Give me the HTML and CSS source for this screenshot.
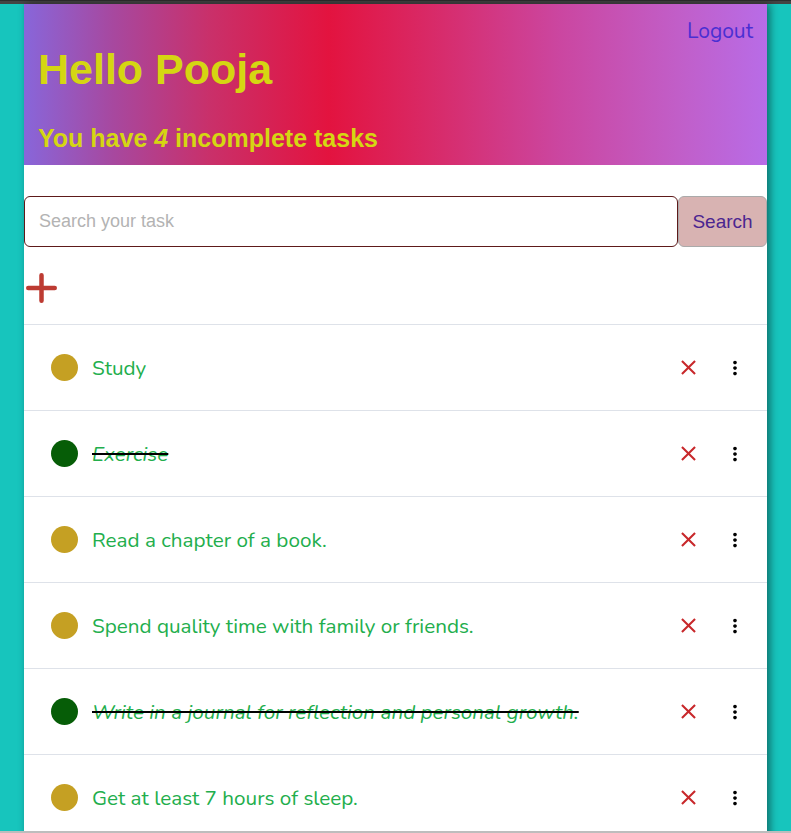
FILE: index.html
```html
<!DOCTYPE html>
<html lang="en">
<head>
<meta charset="utf-8">
<title>Todo</title>
<link rel="stylesheet" href="styles.css">
</head>
<body>
<div class="topbar"></div>
<main class="card">
  <header class="hero">
    <a class="logout" href="#">Logout</a>
    <h1 class="hello">Hello Pooja</h1>
    <h2 class="summary">You have <em>4</em> incomplete tasks</h2>
  </header>
  <form class="search">
    <input class="search-input" type="text" placeholder="Search your task">
    <button class="search-btn" type="button">Search</button>
  </form>
  <div class="add">
    <svg class="plus" width="32" height="32" viewBox="0 0 32 32"><path d="M16.5 3.25V28.75M3.25 16H29.75" stroke="#bd3b32" stroke-width="4.5" stroke-linecap="round" fill="none"/></svg>
  </div>
  <ul class="tasks">
    <li class="task"><span class="dot"></span><span class="label">Study</span>
      <svg class="close" viewBox="0 0 24 24"><path d="M19 6.41 17.59 5 12 10.59 6.41 5 5 6.41 10.59 12 5 17.59 6.41 19 12 13.41 17.59 19 19 17.59 13.41 12z"/></svg>
      <svg class="more" viewBox="0 0 24 24"><path d="M12 8c1.1 0 2-.9 2-2s-.9-2-2-2-2 .9-2 2 .9 2 2 2zm0 2c-1.1 0-2 .9-2 2s.9 2 2 2 2-.9 2-2-.9-2-2-2zm0 6c-1.1 0-2 .9-2 2s.9 2 2 2 2-.9 2-2-.9-2-2-2z"/></svg></li>
    <li class="task done"><span class="dot"></span><span class="label">Exercise</span>
      <svg class="close" viewBox="0 0 24 24"><path d="M19 6.41 17.59 5 12 10.59 6.41 5 5 6.41 10.59 12 5 17.59 6.41 19 12 13.41 17.59 19 19 17.59 13.41 12z"/></svg>
      <svg class="more" viewBox="0 0 24 24"><path d="M12 8c1.1 0 2-.9 2-2s-.9-2-2-2-2 .9-2 2 .9 2 2 2zm0 2c-1.1 0-2 .9-2 2s.9 2 2 2 2-.9 2-2-.9-2-2-2zm0 6c-1.1 0-2 .9-2 2s.9 2 2 2 2-.9 2-2-.9-2-2-2z"/></svg></li>
    <li class="task"><span class="dot"></span><span class="label">Read a chapter of a book.</span>
      <svg class="close" viewBox="0 0 24 24"><path d="M19 6.41 17.59 5 12 10.59 6.41 5 5 6.41 10.59 12 5 17.59 6.41 19 12 13.41 17.59 19 19 17.59 13.41 12z"/></svg>
      <svg class="more" viewBox="0 0 24 24"><path d="M12 8c1.1 0 2-.9 2-2s-.9-2-2-2-2 .9-2 2 .9 2 2 2zm0 2c-1.1 0-2 .9-2 2s.9 2 2 2 2-.9 2-2-.9-2-2-2zm0 6c-1.1 0-2 .9-2 2s.9 2 2 2 2-.9 2-2-.9-2-2-2z"/></svg></li>
    <li class="task"><span class="dot"></span><span class="label">Spend quality time with family or friends.</span>
      <svg class="close" viewBox="0 0 24 24"><path d="M19 6.41 17.59 5 12 10.59 6.41 5 5 6.41 10.59 12 5 17.59 6.41 19 12 13.41 17.59 19 19 17.59 13.41 12z"/></svg>
      <svg class="more" viewBox="0 0 24 24"><path d="M12 8c1.1 0 2-.9 2-2s-.9-2-2-2-2 .9-2 2 .9 2 2 2zm0 2c-1.1 0-2 .9-2 2s.9 2 2 2 2-.9 2-2-.9-2-2-2zm0 6c-1.1 0-2 .9-2 2s.9 2 2 2 2-.9 2-2-.9-2-2-2z"/></svg></li>
    <li class="task done"><span class="dot"></span><span class="label">Write in a journal for reflection and personal growth.</span>
      <svg class="close" viewBox="0 0 24 24"><path d="M19 6.41 17.59 5 12 10.59 6.41 5 5 6.41 10.59 12 5 17.59 6.41 19 12 13.41 17.59 19 19 17.59 13.41 12z"/></svg>
      <svg class="more" viewBox="0 0 24 24"><path d="M12 8c1.1 0 2-.9 2-2s-.9-2-2-2-2 .9-2 2 .9 2 2 2zm0 2c-1.1 0-2 .9-2 2s.9 2 2 2 2-.9 2-2-.9-2-2-2zm0 6c-1.1 0-2 .9-2 2s.9 2 2 2 2-.9 2-2-.9-2-2-2z"/></svg></li>
    <li class="task"><span class="dot"></span><span class="label">Get at least 7 hours of sleep.</span>
      <svg class="close" viewBox="0 0 24 24"><path d="M19 6.41 17.59 5 12 10.59 6.41 5 5 6.41 10.59 12 5 17.59 6.41 19 12 13.41 17.59 19 19 17.59 13.41 12z"/></svg>
      <svg class="more" viewBox="0 0 24 24"><path d="M12 8c1.1 0 2-.9 2-2s-.9-2-2-2-2 .9-2 2 .9 2 2 2zm0 2c-1.1 0-2 .9-2 2s.9 2 2 2 2-.9 2-2-.9-2-2-2zm0 6c-1.1 0-2 .9-2 2s.9 2 2 2 2-.9 2-2-.9-2-2-2z"/></svg></li>
  </ul>
</main>
<div class="bottombar"></div>
</body>
</html>
```

FILE: styles.css
```css
* { box-sizing: border-box; }

html, body {
  margin: 0;
  padding: 0;
}

body {
  background: #17c5bd;
  font-family: "Liberation Sans", Arial, sans-serif;
  overflow: hidden;
  height: 833px;
}

.topbar {
  height: 4px;
  background: #444444;
  border-top: 1px solid #2e2e2e;
}

.card {
  width: 743px;
  margin-left: 24px;
  background: #ffffff;
  box-shadow: 3px 0 8px rgba(0, 0, 0, 0.45);
  min-height: 900px;
}

.hero {
  display: flex;
  flex-direction: column;
  padding: 17px 14px 14px;
  background: linear-gradient(90deg, #8866da 0%, #a7489f 12%, #c9306a 25%, #e3133f 41%, #d82a68 55%, #cb46a0 72%, #c15ec8 88%, #b86ce7 100%);
}

.logout {
  align-self: flex-end;
  font-family: "Nunito", "Lato", sans-serif;
  font-size: 21px;
  line-height: 1;
  height: 21px;
  color: #4a2fd2;
  text-decoration: none;
}

.hello {
  margin: 6px 0 0;
  font-size: 43px;
  line-height: 1;
  font-weight: 700;
  color: #d5d612;
}

.summary {
  margin: 35px 0 0;
  font-size: 25px;
  line-height: 1;
  font-weight: 700;
  color: #d5d612;
}

.summary em {
  font-style: italic;
}

.search {
  display: flex;
  margin: 31px 0 0;
}

.search-input {
  flex: 1;
  height: 51px;
  border: 1px solid #5e1a1a;
  border-radius: 6px;
  padding: 0 14px;
  font-family: "Liberation Sans", Arial, sans-serif;
  font-size: 18px;
  color: #333;
  outline: none;
}

.search-input::placeholder {
  color: #b3b3b3;
}

.search-btn {
  width: 89px;
  height: 51px;
  border: 1px solid #aaaaaa;
  border-radius: 6px;
  background: #d8b3b2;
  color: #4b2590;
  font-family: "Liberation Sans", Arial, sans-serif;
  font-size: 19px;
  padding: 0;
}

.add {
  display: flex;
  padding: 25px 0 20px 1px;
}

.plus {
  display: block;
}

.tasks {
  list-style: none;
  margin: 0;
  padding: 0;
}

.task {
  display: flex;
  align-items: center;
  height: 86px;
  border-top: 1px solid #dee2e9;
  padding: 0 21px 0 27px;
}

.dot {
  width: 27px;
  height: 27px;
  border-radius: 50%;
  background: #c5a023;
  flex: none;
}

.done .dot {
  background: #065d07;
}

.label {
  flex: 1;
  margin-left: 14px;
  font-family: "Nunito", "Lato", sans-serif;
  font-size: 20.7px;
  color: #22ae4c;
}

.done .label {
  font-style: italic;
  text-decoration: line-through;
  text-decoration-color: #000;
  text-decoration-thickness: 2px;
}

.close {
  width: 25px;
  height: 25px;
  fill: #c8282b;
  flex: none;
}

.more {
  width: 22px;
  height: 22px;
  fill: #000;
  margin-left: 23px;
  flex: none;
}

.bottombar {
  position: fixed;
  left: 0;
  right: 0;
  bottom: 0;
  height: 2px;
  background: #bdbdbd;
}
```
